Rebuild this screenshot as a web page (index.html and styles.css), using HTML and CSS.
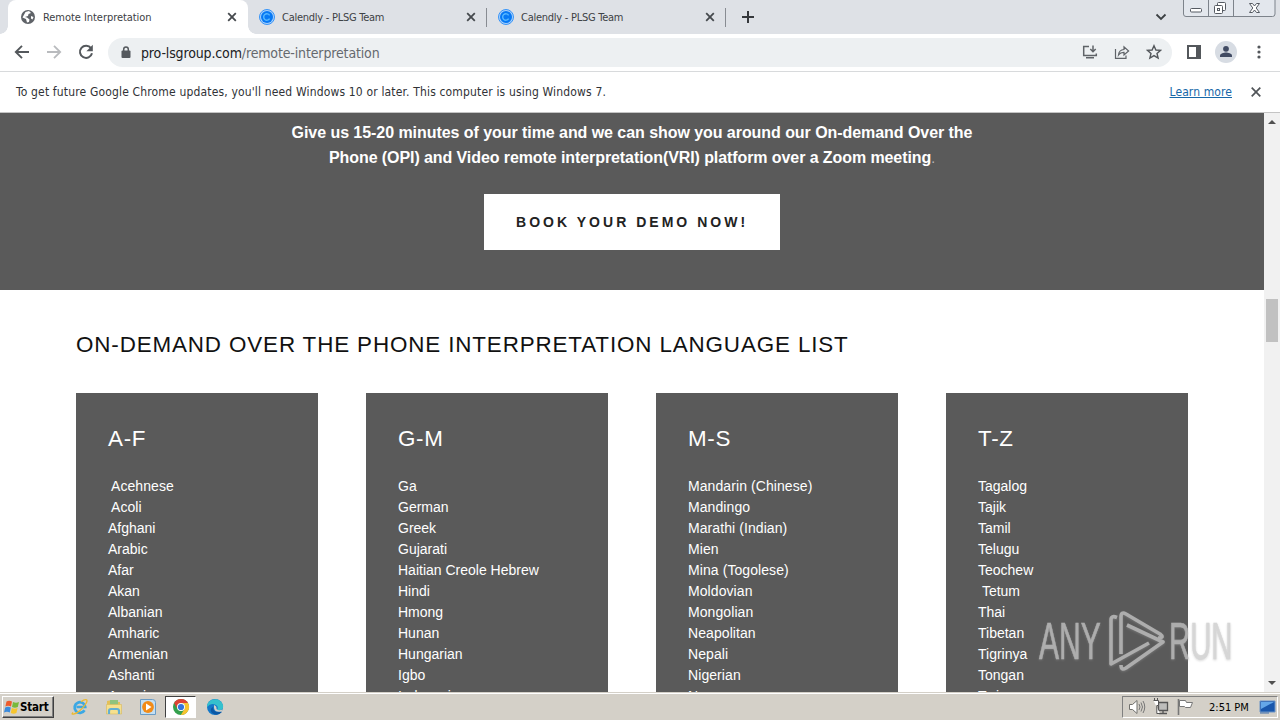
FILE: index.html
```html
<!DOCTYPE html>
<html lang="en">
<head>
<meta charset="utf-8">
<title>Remote Interpretation</title>
<link rel="stylesheet" href="styles.css">
</head>
<body>
<div class="screen">
  <header class="tabstrip">
    <div class="tab tab-active">
      <svg class="favicon" viewBox="0 0 16 16"><circle cx="8" cy="8" r="7" fill="#5f6368"/><path d="M2.500 8.500L6 10l1 3.500 2-.5.5-2.500L7 8.500 5 8l3-1 .5-2L11 4 9 2 5.500 3zM11 7l2.500 1-1 2.500-1.500-1z" fill="#fff"/></svg>
      <span class="tab-title t-remote">Remote Interpretation</span>
      <svg class="tab-close" viewBox="0 0 10 10"><path d="M1.200 1.200l7.600 7.600M8.800 1.200L1.200 8.800"/></svg>
      <i class="curve"></i>
    </div>
    <div class="tab">
      <svg class="favicon" viewBox="0 0 16 16"><circle cx="8" cy="8" r="7.500" fill="#a8d0fb" stroke="#3794f8"/><circle cx="8" cy="8" r="6" fill="#0879f4"/><path d="M10.600 6.300A3.200 3.200 0 1 0 10.600 9.700" fill="none" stroke="#58b9ff" stroke-width="1.400"/></svg>
      <span class="tab-title">Calendly - PLSG Team</span>
      <svg class="tab-close" viewBox="0 0 10 10"><path d="M1.200 1.200l7.600 7.600M8.800 1.200L1.200 8.800"/></svg>
    </div>
    <div class="tab">
      <svg class="favicon" viewBox="0 0 16 16"><circle cx="8" cy="8" r="7.500" fill="#a8d0fb" stroke="#3794f8"/><circle cx="8" cy="8" r="6" fill="#0879f4"/><path d="M10.600 6.300A3.200 3.200 0 1 0 10.600 9.700" fill="none" stroke="#58b9ff" stroke-width="1.400"/></svg>
      <span class="tab-title">Calendly - PLSG Team</span>
      <svg class="tab-close" viewBox="0 0 10 10"><path d="M1.200 1.200l7.600 7.600M8.800 1.200L1.200 8.800"/></svg>
    </div>
    <svg class="new-tab" viewBox="0 0 12 12"><path d="M6 0v12M0 6h12" stroke="#35383c" stroke-width="2"/></svg>
    <svg class="chevron" viewBox="0 0 12 8"><path d="M1.500 1.500L6 6l4.500-4.500" fill="none" stroke="#3c4043" stroke-width="1.800"/></svg>
    <svg class="window-buttons" viewBox="0 0 94 18"><path d="M.5 0v14q0 2.500 2.500 2.500h86.500q2.500 0 2.500-2.500V0M25.500 0v16M50.500 0v16" fill="#e3e7ed" stroke="#7d838b"/><g fill="#fff" stroke="#555a62"><rect x="7.500" y="8.500" width="11" height="3.500" rx="1"/><rect x="34.500" y="2.500" width="8" height="8" rx="1"/><rect x="31.500" y="5.500" width="8" height="8" rx="1"/><rect x="34.500" y="8.500" width="2" height="2"/><path d="M66.500 3.500h3l2 2.500 2-2.500h3L73.200 8l3.300 4.500h-3l-2-2.500-2 2.500h-3L69.800 8z"/></g></svg>
  </header>

  <nav class="toolbar">
    <svg class="nav-icon" viewBox="0 0 16 16"><path d="M15 8H2M8 1.800L1.800 8 8 14.200" fill="none" stroke="#54585c" stroke-width="1.900"/></svg>
    <svg class="nav-icon" viewBox="0 0 16 16"><path d="M1 8h13M8 1.800L14.200 8 8 14.200" fill="none" stroke="#b9bbbe" stroke-width="1.800"/></svg>
    <svg class="nav-icon" viewBox="0 0 16 16"><path d="M13 4.200A6.100 6.100 0 1 0 14 9.300" fill="none" stroke="#54585c" stroke-width="2"/><path d="M14.800.8v6.400H8.400z" fill="#54585c"/></svg>
    <div class="omnibox">
      <svg class="lock" viewBox="0 0 10 13"><rect x=".5" y="4.500" width="9" height="7.500" rx="1" fill="#55595e"/><path d="M2.700 5V3.200a2.300 2.300 0 0 1 4.600 0V5" fill="none" stroke="#55595e" stroke-width="1.500"/></svg>
      <span class="url"><b>pro-lsgroup.com</b><span>/remote-interpretation</span></span>
      <span class="omni-actions">
        <svg viewBox="0 0 16 16"><path d="M7 2.500H1.700v9H14.300V9.500M4 13.700h8M11 1.500v6M8.300 5L11 7.700 13.700 5" fill="none" stroke="#5f6368" stroke-width="1.500"/></svg>
        <svg viewBox="0 0 16 16"><path d="M1.500 5v9.300H12V11.500M4.500 11Q5 5.800 10 5.500V2.800L14.600 7 10 10.900V8.300Q6.500 8.200 4.500 11z" fill="none" stroke="#5f6368" stroke-width="1.200"/></svg>
        <svg viewBox="0 0 16 16"><path d="M8 1.700l1.900 4.300 4.700.4-3.600 3.100 1.100 4.600L8 11.600 3.900 14.100 5 9.500 1.400 6.400l4.700-.4z" fill="none" stroke="#53575b" stroke-width="1.400"/></svg>
      </span>
    </div>
    <svg class="side-panel" viewBox="0 0 14 14"><path d="M1 1h12v12H1z" fill="#fff" stroke="#53575b" stroke-width="2"/><path d="M9 1h4v12H9z" fill="#53575b"/></svg>
    <svg class="avatar" viewBox="0 0 22 22"><circle cx="11" cy="11" r="11" fill="#d7dce3"/><circle cx="11" cy="7.800" r="2.900" fill="#414b63"/><path d="M5 16v-1.400c0-2.200 4-3.100 6-3.100s6 .9 6 3.100V16z" fill="#414b63"/></svg>
    <svg class="menu-dots" viewBox="0 0 4 14"><g fill="#53575b"><circle cx="2" cy="2" r="1.600"/><circle cx="2" cy="7" r="1.600"/><circle cx="2" cy="12" r="1.600"/></g></svg>
  </nav>

  <div class="infobar">
    <span class="notice">To get future Google Chrome updates, you'll need Windows 10 or later. This computer is using Windows 7.</span>
    <a class="learn">Learn more</a>
    <svg class="info-close" viewBox="0 0 10 10"><path d="M.7.7l8.600 8.600M9.300.7L.7 9.300" stroke="#505458" stroke-width="1.700"/></svg>
  </div>

  <div class="viewport">
    <main class="page">
      <section class="demo">
        <p class="pitch"><span class="line-one">Give us 15-20 minutes of your time and we can show you around our On-demand Over the</span><br><span class="line-two">Phone (OPI) and Video remote interpretation(VRI) platform over a Zoom meeting<span class="dot">.</span></span></p>
        <a class="book"><span>BOOK YOUR DEMO NOW!</span></a>
      </section>
      <section class="languages">
        <h2><span>ON-DEMAND OVER THE PHONE INTERPRETATION LANGUAGE LIST</span></h2>
        <div class="cards">
          <article class="card"><h3>A-F</h3><ul><li class="nudged">&nbsp;Acehnese</li><li class="nudged">&nbsp;Acoli</li><li>Afghani</li><li>Arabic</li><li>Afar</li><li>Akan</li><li>Albanian</li><li>Amharic</li><li>Armenian</li><li>Ashanti</li><li>Assyrian</li></ul></article>
          <article class="card"><h3>G-M</h3><ul><li>Ga</li><li>German</li><li>Greek</li><li>Gujarati</li><li>Haitian Creole Hebrew</li><li>Hindi</li><li>Hmong</li><li>Hunan</li><li>Hungarian</li><li>Igbo</li><li>Indonesian</li></ul></article>
          <article class="card"><h3>M-S</h3><ul class="wide"><li>Mandarin (Chinese)</li><li>Mandingo</li><li>Marathi (Indian)</li><li>Mien</li><li>Mina (Togolese)</li><li>Moldovian</li><li>Mongolian</li><li>Neapolitan</li><li>Nepali</li><li>Nigerian</li><li>Nuer</li></ul></article>
          <article class="card"><h3>T-Z</h3><ul><li>Tagalog</li><li>Tajik</li><li>Tamil</li><li>Telugu</li><li>Teochew</li><li>&nbsp;Tetum</li><li>Thai</li><li>Tibetan</li><li>Tigrinya</li><li>Tongan</li><li>Twi</li></ul></article>
        </div>
      </section>
      <div class="watermark">
        <span class="any">ANY</span>
        <svg viewBox="0 0 56 64"><path d="M8 8.500Q2 6 2 11v44L40 34M12 45V8q0-6 5-3l34 20q5 4-2 4M18 16L54 33 17 59q-5 3-5-3" fill="none" stroke="currentColor" stroke-width="3.600" stroke-linejoin="round"/></svg>
        <span class="run">RUN</span>
      </div>
    </main>
    <aside class="scrollbar">
      <svg viewBox="0 0 8 4"><path d="M0 4L4 0l4 4z" fill="#505050"/></svg>
      <i class="thumb"></i>
      <svg viewBox="0 0 8 4"><path d="M0 0l4 4 4-4z" fill="#505050"/></svg>
    </aside>
  </div>

  <footer class="taskbar">
    <div class="start">
      <svg viewBox="0 0 16 16"><path d="M2.500 2.500Q5 .8 8 2.500L7 7.500Q4 6 1.400 7.500z" fill="#ee5b2b"/><path d="M9 3q3 1.500 6 0l-1.200 5Q11 9.500 8 8z" fill="#78b93b"/><path d="M1.200 8.500Q4 7 6.800 8.500l-1 5Q3 12 0 13.500z" fill="#3b8bdc"/><path d="M7.800 9q3 1.500 5.800 0l-1.200 5q-2.700 1.500-5.600 0z" fill="#f7c52c"/></svg>
      <span>Start</span>
    </div>
    <div class="launchers">
      <svg viewBox="0 0 18 18"><path d="M13.500 12.200A5.300 5.300 0 1 1 14.200 9H5.500" fill="none" stroke="#3ba8e4" stroke-width="2.700"/><path d="M2 14.500C-1 17 4 17 9 12.500S18 2 15 1.700q-2-.2-5 2" fill="none" stroke="#edb92e" stroke-width="1.300"/></svg>
      <svg viewBox="0 0 18 18"><path d="M2 3l5-1 1 2h7v12H2z" fill="#e3c058"/><path d="M5 2h8v5H5z" fill="#8fc37d"/><path d="M1.500 6.500h15V16h-15z" fill="#f6e08d" stroke="#d9b95c" stroke-width=".6"/><path d="M4 16v-3q0-2 2-2h6q2 0 2 2v3" fill="none" stroke="#63afd2" stroke-width="2.200"/></svg>
      <svg viewBox="0 0 18 18"><path d="M1.500 1.500h12q3 0 3 3v12h-15z" fill="#c4dff2" stroke="#699bc5"/><circle cx="9" cy="9" r="5.900" fill="#f28b17"/><path d="M7 5.500v7L12.500 9z" fill="#fff"/></svg>
      <span class="active-app"><svg viewBox="0 0 18 18"><circle cx="9" cy="9" r="8" fill="#34a04d"/><path d="M2.100 5A8 8 0 0 1 16 5H9a4 4 0 0 0-3.500 6z" fill="#df4235"/><path d="M16 5a8 8 0 0 1-7.200 12l3.700-6A4 4 0 0 0 9 5z" fill="#f8c32f"/><circle cx="9" cy="9" r="4" fill="#fff"/><circle cx="9" cy="9" r="3.100" fill="#3474dd"/></svg></span>
      <svg viewBox="0 0 18 18"><circle cx="9" cy="9" r="8" fill="#1478c8"/><path d="M1 9C1 0 14-2 17 7q1 6-6 5 2-3-1-5-5-3-9 2z" fill="#35c1cd"/><path d="M7 9q0 5 5 5h4Q11 19 6 15q-3-4 1-6z" fill="#0b58a5"/><path d="M8 7q3 1 2.500 4 2 2.200 6 .5l-1 2Q9 15 8 10z" fill="#d4d0c8"/></svg>
    </div>
    <div class="tray">
      <svg viewBox="0 0 18 18"><path d="M1.500 6.500h3L9 2.500v13l-4.500-4h-3z" fill="#fff" stroke="#71716d"/><path d="M11 6q2 3 0 6M13 4.500q3 4.500 0 9M15 3q3.500 6 0 12" fill="none" stroke="#777" stroke-width="1"/></svg>
      <svg viewBox="0 0 18 18"><path d="M6.500 4.500h9v8h-9zM7 15.500h8M11 12.500v3" fill="#bdbdbb" stroke="#555" stroke-width="1.300"/><path d="M1.500 2.500h5v5H4.800v8H8M2.500 0v3M5.500 0v3" fill="#fff" stroke="#555"/></svg>
      <svg viewBox="0 0 18 18"><path d="M2.500 1v16" stroke="#777" stroke-width="1.600"/><path d="M3.500 2.500h6l1 2h6l-2 5h-5l-1-1h-5z" fill="#fff" stroke="#777"/></svg>
      <span class="clock">2:51 PM</span>
      <svg viewBox="0 0 18 18"><path d="M2 3h15v11H2z" fill="#1957ac" stroke="#6b94c7"/><path d="M3 4h13L3 11z" fill="#64a7e8"/><path d="M2 15h9" stroke="#416eaa"/></svg>
    </div>
  </footer>
</div>
</body>
</html>
```
FILE: styles.css
```css
* { box-sizing: border-box; }
body { margin: 0; background: #fff; font-family: "DejaVu Sans", sans-serif; }
svg { display: block; flex: none; }
.screen { width: 1280px; height: 720px; display: flex; flex-direction: column; overflow: hidden; }

.tabstrip { height: 34px; flex: none; display: flex; background: #dee1e6; padding-left: 8px; position: relative; }
.tab { width: 239px; height: 34px; display: flex; align-items: center; padding: 0 11px 0 11px; color: #3d4145; position: relative; }
.tab-active { width: 240px; background: #fff; border-radius: 8px 8px 0 0; padding-left: 12px; }
.tab-active::before { content: ""; position: absolute; left: -8px; bottom: 0; width: 8px; height: 8px; background: radial-gradient(circle at 0 0, #dee1e6 7.5px, #fff 8px); }
.curve { position: absolute; right: -8px; bottom: 0; width: 8px; height: 8px; background: radial-gradient(circle at 100% 0, #dee1e6 7.5px, #fff 8px); }
.tab + .tab::after { content: ""; position: absolute; right: 0; top: 8px; width: 1px; height: 19px; background: #888c92; }
.favicon { width: 16px; height: 16px; margin-right: 7px; }
.tab-title { font-family: "DejaVu Sans Condensed", "DejaVu Sans", sans-serif; font-stretch: condensed; font-size: 11px; white-space: nowrap; flex: 1; letter-spacing: -.26px; }
.t-remote { letter-spacing: -.05px; }
.tab-close { width: 10px; height: 10px; fill: none; stroke: #45494d; stroke-width: 1.8; }
.new-tab { width: 12px; height: 12px; margin: 11px 0 0 16px; }
.chevron { width: 12px; height: 8px; margin: 13px 16px 0 auto; }
.window-buttons { width: 94px; height: 18px; margin-right: 3px; }

.toolbar { height: 38px; flex: none; display: flex; align-items: center; padding: 0 19px 1px 14px; border-bottom: 1px solid #d8dadc; }
.nav-icon { width: 16px; height: 16px; margin-right: 16px; }
.omnibox { width: 1064px; height: 29px; margin-left: -2px; border-radius: 15px; background: #edf0f2; display: flex; align-items: center; padding: 0 10px 0 13px; }
.lock { width: 10px; height: 13px; margin-right: 10px; }
.url { font-family: "DejaVu Sans Condensed", "DejaVu Sans", sans-serif; font-stretch: condensed; font-size: 14px; line-height: 16px; padding-top: 1px; white-space: nowrap; color: #65696e; letter-spacing: -.14px; }
.url b { font-weight: 400; color: #202124; }
.omni-actions { display: flex; gap: 16px; margin-left: auto; }
.omni-actions svg { width: 16px; height: 16px; }
.side-panel { width: 14px; height: 14px; margin-left: 15px; }
.avatar { width: 22px; height: 22px; margin-left: 14px; }
.menu-dots { width: 4px; height: 14px; margin-left: auto; }

.infobar { height: 41px; flex: none; display: flex; align-items: center; padding: 0 19px 1px 16px; border-bottom: 1px solid #c4c4c4; font-family: "DejaVu Sans Condensed", "DejaVu Sans", sans-serif; font-stretch: condensed; font-size: 12px; color: #303236; white-space: nowrap; }
.notice { letter-spacing: .16px; }
.learn { color: #1667a8; text-decoration: underline; margin-left: auto; margin-right: 19px; letter-spacing: .1px; }
.info-close { width: 10px; height: 10px; }

.viewport { height: 579px; flex: none; display: flex; }
.page { width: 1264px; height: 579px; overflow: hidden; position: relative; font-family: "Liberation Sans", Arial, sans-serif; }
.demo { height: 177px; background: #5a5a5a; display: flex; flex-direction: column; align-items: center; padding-top: 7px; }
.pitch { margin: 0; color: #fff; font-size: 16px; line-height: 25px; font-weight: 700; text-align: center; white-space: nowrap; }
.line-one { letter-spacing: -.055px; }
.line-two { letter-spacing: -.085px; }
.dot { font-weight: 400; font-size: 14px; color: #bbb; }
.book { width: 296px; height: 56px; background: #fff; margin-top: 23px; display: flex; align-items: center; padding-left: 32px; font-size: 14px; font-weight: 700; letter-spacing: 3.02px; color: #222; white-space: nowrap; }
.languages { padding: 41px 76px 0; }
h2, h3 { font-weight: 400; margin: 0; font-size: 22.4px; white-space: nowrap; }
h2 { line-height: 28px; letter-spacing: .87px; color: #111; }
.cards { display: grid; grid-template-columns: repeat(4, 242px); gap: 48px; margin-top: 34px; }
.card { height: 320px; background: #5a5a5a; color: #fff; padding: 32px 32px 0; }
h3 { line-height: 28px; letter-spacing: .7px; }
ul { list-style: none; margin: 23px 0 0; padding: 0; font-size: 14px; line-height: 21px; white-space: nowrap; }
.nudged { word-spacing: -1px; letter-spacing: .08px; }
.wide { letter-spacing: .08px; }
.watermark { position: absolute; left: 1039px; top: 496px; width: 193px; height: 64px; display: flex; align-items: center; color: #c9c9c9; opacity: .75; filter: drop-shadow(0 1px 1px #9998); }
.watermark span { flex: none; font-family: "Liberation Sans", sans-serif; font-size: 51px; line-height: 64px; width: 63px; transform-origin: 0 50%; transform: translateY(1px) scaleX(.59); white-space: nowrap; -webkit-text-stroke: .6px currentColor; }
.watermark svg { width: 56px; height: 64px; margin: 0 4px 0 7px; }
.watermark .run { width: 62px; transform: translateY(1px) scaleX(.575); }
.scrollbar { width: 16px; height: 579px; background: #f1f1f1; display: flex; flex-direction: column; align-items: center; padding: 7px 0; }
.scrollbar svg { width: 8px; height: 4px; }
.thumb { width: 12px; height: 43px; background: #c1c1c1; margin-top: 175px; margin-bottom: auto; }

.taskbar { height: 28px; flex: none; background: #d4d0c8; border-top: 1px solid #d4d0c8; box-shadow: inset 0 1px #fff; display: flex; align-items: center; padding: 1px 2px 0; }
.start { width: 52px; height: 22px; display: flex; align-items: center; padding-left: 1px; gap: 0; border: 1px solid; border-color: #fff #404040 #404040 #fff; box-shadow: inset -1px -1px #808080; color: #000; }
.start svg { width: 16px; height: 16px; }
.start span { font-family: "DejaVu Sans Condensed", "DejaVu Sans", sans-serif; font-stretch: condensed; font-size: 11.5px; font-weight: 700; letter-spacing: -.2px; }
.launchers { display: flex; align-items: center; margin-left: 17px; gap: 16px; }
.launchers svg { width: 18px; height: 18px; }
.active-app { width: 31px; height: 22px; margin: 0 -6px 0 -8px; background: #fff; border: 1px solid; border-color: #404040 #fff #fff #404040; display: flex; align-items: center; justify-content: center; }
.tray { width: 156px; height: 22px; margin-left: auto; border: 1px solid; border-color: #808080 #fff #fff #808080; display: flex; align-items: center; padding: 0 1px 0 5px; }
.tray svg { width: 18px; height: 18px; margin-right: 6px; }
.tray svg:last-child { margin: 0 0 0 auto; }
.clock { font-family: "DejaVu Sans Condensed", "DejaVu Sans", sans-serif; font-stretch: condensed; font-size: 11px; color: #000; letter-spacing: 0; margin-left: 9px; white-space: nowrap; }
```
